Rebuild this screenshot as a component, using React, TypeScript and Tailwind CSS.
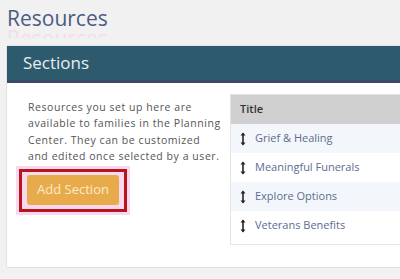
const rows = ['Grief & Healing', 'Meaningful Funerals', 'Explore Options', 'Veterans Benefits']

const lines = [
  'Resources you set up here are',
  'available to families in the Planning',
  'Center. They can be customized',
  'and edited once selected by a user.',
]

const DragIcon = () => (
  <svg width="6" height="14" viewBox="0 0 6 14" className="shrink-0">
    <path d="M3 1.5v11" stroke="#222" strokeWidth="1.6" />
    <path d="M0.5 3.5 3 0.5 5.5 3.5z" fill="#222" />
    <path d="M0.5 10.5 3 13.5 5.5 10.5z" fill="#222" />
  </svg>
)

export default function App() {
  return (
    <div className="w-[400px] h-[279px] overflow-hidden bg-[#f1f1f1] font-['Open_Sans',sans-serif]">
      <div className="pl-[7px] pt-[5px] h-[38px] overflow-hidden">
        <h1 className="text-[21px] leading-[26px] text-[#4b5b84]">Resources</h1>
        <div className="text-[21px] leading-[14px] text-[#f4dde6]">Resources</div>
      </div>
      <div className="mt-[7px] ml-[6px] w-[410px] bg-white border border-[#e2e2e2] rounded-[2px] h-[223px]">
        <div className="h-[37px] bg-[#2e5a6d] border-b-[3px] border-[#3c4a68] pl-[16px] flex items-center">
          <span className="text-[17px] text-[#e6f0f2]">Sections</span>
        </div>
        <div className="flex pt-[11px]">
          <div className="w-[223px] shrink-0 pl-[9px]">
            <p className="pl-[12px] pt-[5px] text-[10.5px] tracking-[0.55px] leading-[16.3px] text-[#555] whitespace-nowrap">
              {lines.map((l, i) => (
                <span key={i} className="block">{l}</span>
              ))}
            </p>
            <div className="mt-[2px] inline-block p-[3px] bg-[#f8d8ee]">
              <div className="border-[3px] border-[#b8141c] px-[5px] pt-[3px] pb-[4px] bg-[#f8d8ee]">
                <button className="block w-[92px] h-[30px] rounded-[3px] bg-[#e8ab4c] text-[13px] text-[#fbeacb]">Add Section</button>
              </div>
            </div>
          </div>
          <div className="flex-1 border border-[#e4e4e4] pb-[4px]">
            <div className="h-[29px] bg-[#d0d0d0] flex items-center pl-[9px] text-[11px] font-semibold text-[#333]">Title</div>
            {rows.map((r, i) => (
              <div key={r} className={`h-[29px] flex items-center pl-[9px] gap-[9px] ${i % 2 === 0 ? 'bg-[#f3f7fb]' : 'bg-white'}`}>
                <DragIcon />
                <span className="text-[11px] text-[#5d6c8f]">{r}</span>
              </div>
            ))}
          </div>
        </div>
      </div>
    </div>
  )
}
